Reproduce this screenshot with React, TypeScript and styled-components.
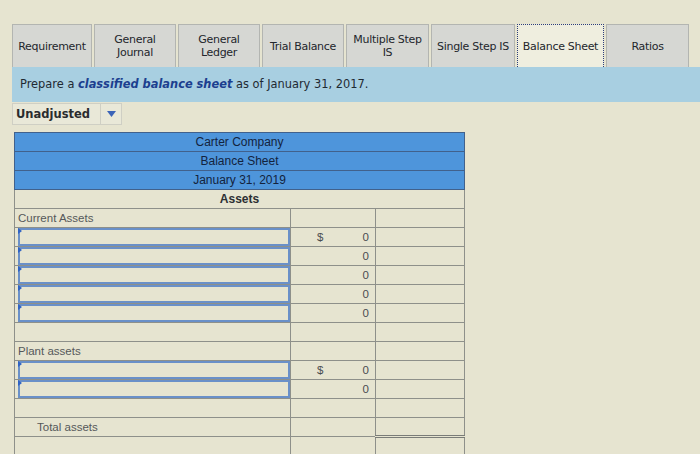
import React from 'react'
import styled, { createGlobalStyle } from 'styled-components'

const GlobalStyle = createGlobalStyle`
  html, body {
    margin: 0;
    padding: 0;
    background: #e6e4d0;
  }
  body {
    width: 700px;
    height: 454px;
    overflow: hidden;
    font-family: "DejaVu Sans", Verdana, sans-serif;
  }
`

const TABS = [
  { label: 'Requirement', width: 80 },
  { label: 'General Journal', width: 82 },
  { label: 'General Ledger', width: 82 },
  { label: 'Trial Balance', width: 82 },
  { label: 'Multiple Step IS', width: 83 },
  { label: 'Single Step IS', width: 84 },
  { label: 'Balance Sheet', width: 87 },
  { label: 'Ratios', width: 83 },
]

type Line = { kind: 'input' | 'blank' | 'label' | 'total'; text?: string; dollar?: boolean; value?: string }

const LINES: Line[] = [
  { kind: 'label', text: 'Current Assets' },
  { kind: 'input', dollar: true, value: '0' },
  { kind: 'input', value: '0' },
  { kind: 'input', value: '0' },
  { kind: 'input', value: '0' },
  { kind: 'input', value: '0' },
  { kind: 'blank' },
  { kind: 'label', text: 'Plant assets' },
  { kind: 'input', dollar: true, value: '0' },
  { kind: 'input', value: '0' },
  { kind: 'blank' },
  { kind: 'total', text: 'Total assets' },
  { kind: 'blank' },
]

const App = () => {
  return (
    <Page>
      <GlobalStyle />
      <TabBar>
        {TABS.map((t) => (
          <Tab key={t.label} w={t.width} active={t.label === 'Balance Sheet'}>
            {t.label}
          </Tab>
        ))}
      </TabBar>
      <Banner>
        Prepare a <Em>classified balance sheet</Em> as of January 31, 2017.
      </Banner>
      <Select>
        <SelectText>Unadjusted</SelectText>
        <SelectArrow>
          <svg width="9" height="6" viewBox="0 0 9 6">
            <path d="M0 0 L9 0 L4.5 6 Z" fill="#3b64b8" />
          </svg>
        </SelectArrow>
      </Select>
      <Sheet>
        <colgroup>
          <col style={{ width: 276 }} />
          <col style={{ width: 85 }} />
          <col style={{ width: 89 }} />
        </colgroup>
        <tbody>
          <HeadRow>
            <HeadCell colSpan={3}>Carter Company</HeadCell>
          </HeadRow>
          <HeadRow>
            <HeadCell colSpan={3}>Balance Sheet</HeadCell>
          </HeadRow>
          <HeadRow>
            <HeadCell colSpan={3}>January 31, 2019</HeadCell>
          </HeadRow>
          <Row>
            <SectionCell colSpan={3}>Assets</SectionCell>
          </Row>
          {LINES.map((l, i) => (
            <Row key={i}>
              <LabelCell indent={l.kind === 'total'}>
                {l.kind === 'input' ? (
                  <InputBox>
                    <Marker />
                  </InputBox>
                ) : (
                  l.text
                )}
              </LabelCell>
              <AmountCell>
                {l.dollar && <Dollar>$</Dollar>}
                {l.value}
              </AmountCell>
              <TotalCell doubled={l.kind === 'total'} />
            </Row>
          ))}
        </tbody>
      </Sheet>
    </Page>
  )
}

const Page = styled.div`
  padding-top: 24px;
  padding-left: 12px;
`

const TabBar = styled.div`
  display: flex;
  gap: 2px;
`

const Tab = styled.div<{ active?: boolean; w: number }>`
  width: ${({ w }) => w}px;
  height: 43px;
  box-sizing: border-box;
  display: flex;
  align-items: center;
  justify-content: center;
  text-align: center;
  font-size: 11px;
  line-height: 13px;
  color: #23262c;
  background: ${({ active }) => (active ? '#efeedf' : '#d6d7d3')};
  border: ${({ active }) => (active ? '1px dotted #2c3d7a' : '1px solid #b3b5b1')};
  border-bottom: none;
  padding: 0 4px;
  letter-spacing: -0.3px;
  ${({ active }) => active && 'white-space: nowrap; padding: 0;'}
`

const Banner = styled.div`
  height: 35px;
  line-height: 35px;
  background: #a8cfe1;
  padding-left: 8px;
  font-size: 11.4px;
  color: #1f2a33;
  white-space: nowrap;
`

const Em = styled.span`
  font-weight: bold;
  font-style: italic;
  color: #1c3f8f;
`

const Select = styled.div`
  margin-top: 1px;
  width: 110px;
  height: 22px;
  box-sizing: border-box;
  display: flex;
  border: 1px solid #cfcfc4;
  background: #e9e8d8;
`

const SelectText = styled.div`
  flex: 1;
  display: flex;
  align-items: center;
  padding-left: 3px;
  font-size: 11.5px;
  font-weight: bold;
  color: #2a2c2e;
`

const SelectArrow = styled.div`
  width: 20px;
  border-left: 1px solid #cfcfc4;
  display: flex;
  align-items: center;
  justify-content: center;
`

const Sheet = styled.table`
  margin-top: 7px;
  margin-left: 2px;
  border-collapse: collapse;
  table-layout: fixed;
  width: 450px;
  font-family: "Liberation Sans", Arial, sans-serif;
  font-size: 12px;
`

const HeadRow = styled.tr`
  height: 19px;
  background: #4e95db;
`

const HeadCell = styled.td`
  text-align: center;
  color: #13233d;
  padding: 0;
  border: 1px solid #41618c;
`

const Row = styled.tr`
  height: 19px;
`

const SectionCell = styled.td`
  text-align: center;
  font-weight: bold;
  color: #2c2f33;
  padding: 0;
  border: 1px solid #8e908a;
`

const LabelCell = styled.td<{ indent?: boolean }>`
  box-sizing: border-box;
  padding: 0 0 0 ${({ indent }) => (indent ? '22px' : '3px')};
  color: #55585a;
  font-size: 11.5px;
  border: 1px solid #8e908a;
  vertical-align: middle;
`

const InputBox = styled.div`
  position: relative;
  height: 18px;
  box-sizing: border-box;
  border: 2px solid #6a90c8;
`

const Marker = styled.span`
  position: absolute;
  top: -2px;
  left: -2px;
  width: 0;
  height: 0;
  border-top: 3px solid transparent;
  border-bottom: 3px solid transparent;
  border-left: 4px solid #2f63c4;
`

const AmountCell = styled.td`
  padding: 0 6px 0 0;
  text-align: right;
  color: #4a4d50;
  font-size: 11.5px;
  border: 1px solid #8e908a;
  position: relative;
`

const Dollar = styled.span`
  position: absolute;
  left: 26px;
`

const TotalCell = styled.td<{ doubled?: boolean }>`
  border: 1px solid #8e908a;
  border-bottom: ${({ doubled }) => (doubled ? '3px double #7a7c78' : '1px solid #8e908a')};
`

export default App
